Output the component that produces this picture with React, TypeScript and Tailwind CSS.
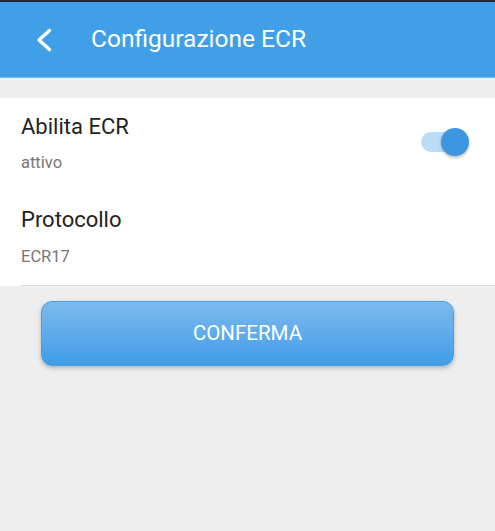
export default function App() {
  return (
    <div
      className="h-[531px] w-[495px] overflow-hidden bg-[#eeeeee]"
      style={{ fontFamily: "Roboto, 'Liberation Sans', sans-serif" }}
    >
      <div className="h-[2px] bg-[#1f2a33]" />
      <header className="flex h-[76px] items-center border-b border-[#7fbdf0] bg-[#409fe7]">
        <svg
          className="ml-[36px] h-[24px] w-[16px]"
          viewBox="0 0 16 24"
          fill="none"
          stroke="white"
          strokeWidth="3.4"
          strokeLinecap="round"
          strokeLinejoin="round"
        >
          <path d="M13.5 2.5 L3 12 L13.5 21.5" />
        </svg>
        <h1 className="ml-[39px] text-[24.5px] text-white">Configurazione ECR</h1>
      </header>

      <div className="mt-[20px] bg-white">
        <div className="flex items-start pr-[26px]">
          <div className="flex-1 pl-[21px] pt-[16px]">
            <div className="text-[22px] leading-[26px] text-[#222]">Abilita ECR</div>
            <div className="mt-[13px] text-[16.5px] leading-[20px] text-[#777]">attivo</div>
          </div>
          {/* switch */}
          <div className="relative mt-[30px] h-[28px] w-[48px]">
            <div className="absolute left-0 top-[4px] h-[20px] w-[38px] rounded-full bg-[#bcdcf6]" />
            <div className="absolute right-0 top-0 h-[28px] w-[28px] rounded-full bg-[#3c97e0] shadow-[0_2px_3px_rgba(0,0,0,0.25)]" />
          </div>
        </div>
        <div className="pl-[21px] pt-[34px]">
          <div className="text-[22px] leading-[26px] text-[#222]">Protocollo</div>
          <div className="mt-[14px] text-[16.5px] leading-[20px] text-[#777]">ECR17</div>
          <div className="mt-[18px] h-px bg-[#dcdcdc]" />
        </div>
      </div>

      <div className="px-[41px] pt-[15px]">
        <button className="flex h-[65px] w-full items-center justify-center rounded-[11px] border border-[#4b9fe0] bg-gradient-to-b from-[#7bbaee] to-[#3f9de7] text-[20.5px] text-white shadow-[0_2px_4px_rgba(0,0,0,0.25)]">
          CONFERMA
        </button>
      </div>
    </div>
  );
}
